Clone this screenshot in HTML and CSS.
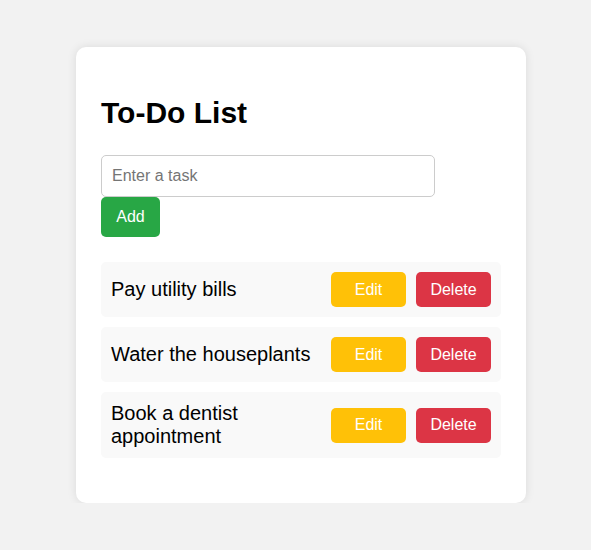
FILE: index.html
```html
<!DOCTYPE html>
<html lang="en">
<head>
<meta charset="UTF-8">
<title>To-Do List</title>
<link rel="stylesheet" href="styles.css">
</head>
<body>
<div class="card">
  <h1 class="title">To-Do List</h1>
  <div class="entry">
    <input class="task-input" type="text" placeholder="Enter a task">
    <button class="btn btn-add">Add</button>
  </div>
  <ul class="tasks">
    <li class="task">
      <span class="task-text">Pay utility bills</span>
      <button class="btn btn-small btn-edit">Edit</button>
      <button class="btn btn-small btn-delete">Delete</button>
    </li>
    <li class="task">
      <span class="task-text">Water the houseplants</span>
      <button class="btn btn-small btn-edit">Edit</button>
      <button class="btn btn-small btn-delete">Delete</button>
    </li>
    <li class="task">
      <span class="task-text">Book a dentist appointment</span>
      <button class="btn btn-small btn-edit">Edit</button>
      <button class="btn btn-small btn-delete">Delete</button>
    </li>
  </ul>
</div>
</body>
</html>
```

FILE: styles.css
```css
* { box-sizing: border-box; }

body {
  margin: 0;
  padding-top: 47px;
  background: #f2f2f2;
  font-family: "Liberation Sans", Arial, sans-serif;
}

.card {
  width: 450px;
  margin-left: 76px;
  padding: 25px;
  background: #ffffff;
  border-radius: 10px;
  box-shadow: 0 0 10px rgba(0, 0, 0, 0.1);
}

.title {
  height: 34px;
  margin: 24px 0 25px;
  font-size: 30px;
  line-height: 34px;
  font-weight: bold;
  color: #000;
}

.entry {
  display: flex;
  flex-direction: column;
  align-items: flex-start;
}

.task-input {
  display: block;
  width: 334px;
  height: 42px;
  padding: 0 10px;
  border: 1px solid #cccccc;
  border-radius: 5px;
  font-family: inherit;
  font-size: 16px;
  color: #000;
}

.task-input::placeholder { color: #757575; }

.btn {
  border: none;
  border-radius: 5px;
  color: #ffffff;
  font-family: inherit;
  font-size: 16px;
  cursor: pointer;
}

.btn-add {
  width: 59px;
  height: 40px;
  padding: 0;
  background: #28a745;
}

.tasks {
  list-style: none;
  margin: 25px 0 20px;
  padding: 0;
  display: flex;
  flex-direction: column;
  gap: 10px;
}

.task {
  display: flex;
  align-items: center;
  padding: 10px;
  background: #f9f9f9;
  border-radius: 5px;
}

.task-text {
  flex: 1;
  font-size: 20px;
  color: #000;
}

.btn-small {
  width: 75px;
  height: 35px;
  margin-left: 10px;
  flex-shrink: 0;
}

.btn-edit { background: #ffc107; }
.btn-delete { background: #dc3545; }
```
